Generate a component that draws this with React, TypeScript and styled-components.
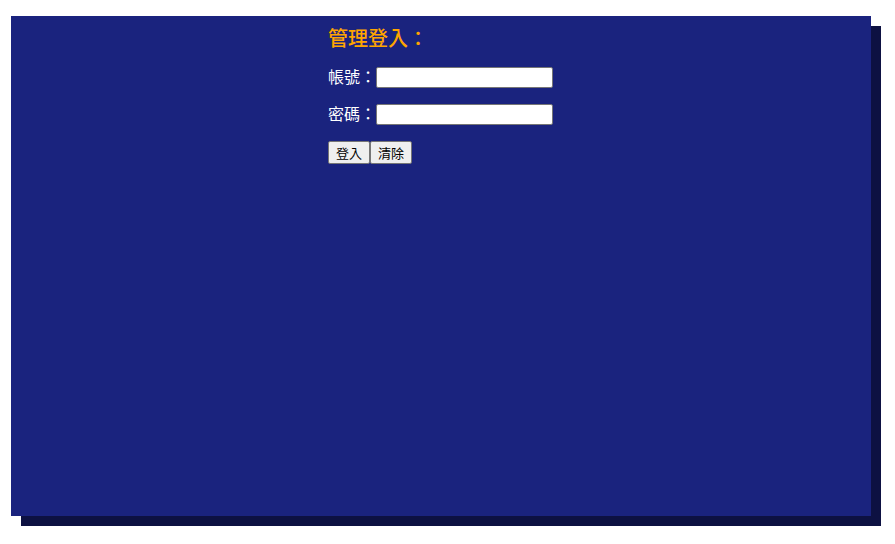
import React from 'react';
import styled, { createGlobalStyle } from 'styled-components';

const GlobalStyle = createGlobalStyle`
  html, body {
    margin: 0;
    padding: 0;
    background: #ffffff;
    font-family: "Liberation Serif", "Noto Sans CJK TC", serif;
  }
`;

const Page = styled.div`
  padding: 16px 0 18px 11px;
`;

const Panel = styled.div`
  width: 860px;
  height: 500px;
  background: #1a237e;
  box-shadow: 10px 10px 0 #0d1142;
  padding: 11px 0 0 317px;
  box-sizing: border-box;
`;

const Title = styled.div`
  font-size: 20px;
  line-height: 24px;
  font-weight: 500;
  color: #ffa500;
`;

const Row = styled.div`
  display: flex;
  align-items: center;
  height: 21px;
  margin-top: 16px;
`;

const Label = styled.label`
  color: #ffffff;
  font-size: 16px;
  line-height: 21px;
`;

const Field = styled.input`
  width: 177px;
  height: 21px;
  box-sizing: border-box;
  border: 1px solid #767676;
  border-radius: 2px;
  padding: 1px 2px;
  font-size: 13px;
  background: #ffffff;
  outline: none;
  caret-color: #000000;
`;

const Actions = styled.div`
  display: flex;
  margin-top: 16px;
`;

const Button = styled.button`
  width: 42px;
  height: 23px;
  box-sizing: border-box;
  background: #efefef;
  border: 1px solid #767676;
  border-radius: 2px;
  font-size: 13px;
  font-family: "Liberation Sans", "Noto Sans CJK TC", sans-serif;
  color: #000000;
  padding: 0;
`;

export default function App() {
  return (
    <>
      <GlobalStyle />
      <Page>
        <Panel>
          <Title>管理登入：</Title>
          <Row>
            <Label htmlFor="account">帳號：</Label>
            <Field id="account" type="text" autoFocus />
          </Row>
          <Row>
            <Label htmlFor="password">密碼：</Label>
            <Field id="password" type="password" />
          </Row>
          <Actions>
            <Button type="submit">登入</Button>
            <Button type="reset">清除</Button>
          </Actions>
        </Panel>
      </Page>
    </>
  );
}
